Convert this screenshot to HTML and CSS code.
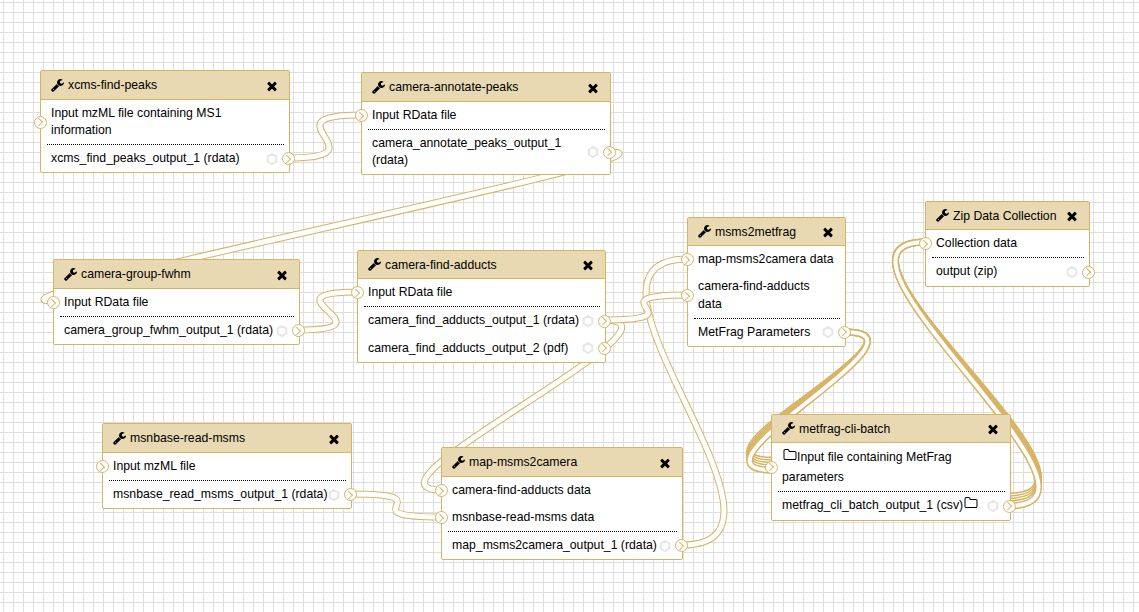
FILE: index.html
```html
<!DOCTYPE html>
<html lang="en">
<head>
  <meta charset="UTF-8">
  <meta name="viewport" content="width=device-width, initial-scale=1.0">
  <title>Workflow Editor</title>
  <link rel="stylesheet" href="styles.css">
</head>
<body>
  <!-- icon sheet -->
  <svg class="icon-sheet" aria-hidden="true">
    <symbol id="i-wrench" viewBox="0 0 1792 1792"><path d="M384 1344q0-26-19-45t-45-19-45 19-19 45 19 45 45 19 45-19 19-45zm644-420l-682 682q-37 37-90 37-52 0-91-37l-106-108q-38-36-38-90 0-53 38-91l681-681q39 98 114.5 173.5t173.5 114.5zm634-435q0 39-23 106-47 134-164.5 217.5t-258.5 83.5q-185 0-316.5-131.5t-131.5-316.5 131.5-316.5 316.5-131.5q58 0 121.5 16.5t107.5 46.5q16 11 16 28t-16 28l-293 169v224l193 107q5-3 79-48.5t135.5-81 70.5-35.5q15 0 23.5 10t8.5 25z"/></symbol>
    <symbol id="i-close" viewBox="0 0 1792 1792"><path d="M1490 1322q0 40-28 68l-136 136q-28 28-68 28t-68-28l-294-294-294 294q-28 28-68 28t-68-28l-136-136q-28-28-28-68t28-68l294-294-294-294q-28-28-28-68t28-68l136-136q28-28 68-28t68 28l294 294 294-294q28-28 68-28t68 28l136 136q28 28 28 68t-28 68l-294 294 294 294q28 28 28 68z"/></symbol>
    <symbol id="i-folder" viewBox="0 0 1792 1792"><path d="M1600 1312v-704q0-40-28-68t-68-28h-704q-40 0-68-28t-28-68v-64q0-40-28-68t-68-28h-320q-40 0-68 28t-28 68v960q0 40 28 68t68 28h1216q40 0 68-28t28-68zm128-704v704q0 92-66 158t-158 66h-1216q-92 0-158-66t-66-158v-960q0-92 66-158t158-66h320q92 0 158 66t66 158v32h672q92 0 158 66t66 158z"/></symbol>
    <symbol id="i-cog" viewBox="0 0 12 12"><path d="M6 1l4.3 2.5v5L6 11 1.700 8.500v-5z"/></symbol>
  </svg>

  <div class="canvas">
    <!-- connections, drawn under the nodes: gold stroke, then white core -->
    <svg class="wires" width="1139" height="612">
      <path d="M288 158C388 158 261 115 361 115"/>
      <path class="core" d="M288 158C388 158 261 115 361 115"/>
      <path d="M610 152C710 152 -47 301 53 301"/>
      <path class="core" d="M610 152C710 152 -47 301 53 301"/>
      <path d="M298 330C398 330 258 292 358 292"/>
      <path class="core" d="M298 330C398 330 258 292 358 292"/>
      <path d="M682 545C825 545 545 259 688 259"/>
      <path class="core" d="M682 545C825 545 545 259 688 259"/>
      <path d="M604 320C704 320 342 490 442 490"/>
      <path class="core" d="M604 320C704 320 342 490 442 490"/>
      <path d="M604 320C704 320 588 295 688 295"/>
      <path class="core" d="M604 320C704 320 588 295 688 295"/>
      <path d="M351 494C451 494 342 517 442 517"/>
      <path class="core" d="M351 494C451 494 342 517 442 517"/>

      <!-- collection into metfrag-cli-batch -->
      <g class="bundle">
        <path d="M845 332C945 332 672 460 772 460"/>
        <path class="core" d="M845 332C945 332 672 460 772 460"/>
        <path d="M845 332C945 332 672 462.500 772 462.500"/>
        <path class="core" d="M845 332C945 332 672 462.500 772 462.500"/>
        <path d="M845 332C945 332 672 465 772 465"/>
        <path class="core" d="M845 332C945 332 672 465 772 465"/>
        <path d="M845 332C945 332 672 467.500 772 467.500"/>
        <path class="core" d="M845 332C945 332 672 467.500 772 467.500"/>
        <path d="M845 332C945 332 672 470 772 470"/>
        <path class="core" d="M845 332C945 332 672 470 772 470"/>
      </g>

      <!-- collection into Zip Data Collection -->
      <g class="bundle">
        <path d="M1008 496C1140 496 794 242 926 242"/>
        <path class="core" d="M1008 496C1140 496 794 242 926 242"/>
        <path d="M1008 498.500C1140 498.500 794 242 926 242"/>
        <path class="core" d="M1008 498.500C1140 498.500 794 242 926 242"/>
        <path d="M1008 501C1140 501 794 242 926 242"/>
        <path class="core" d="M1008 501C1140 501 794 242 926 242"/>
        <path d="M1008 503.500C1140 503.500 794 242 926 242"/>
        <path class="core" d="M1008 503.500C1140 503.500 794 242 926 242"/>
        <path d="M1008 506C1140 506 794 242 926 242"/>
        <path class="core" d="M1008 506C1140 506 794 242 926 242"/>
      </g>
    </svg>

    <div class="node node-xcms">
      <div class="node-title">
        <svg class="icon"><use href="#i-wrench"/></svg>
        <span class="node-name">xcms-find-peaks</span>
        <svg class="icon"><use href="#i-close"/></svg>
      </div>
      <div class="row row-in"><span class="term term-in"></span><span class="label">Input mzML file containing MS1 information</span></div>
      <div class="rule"></div>
      <div class="row"><span class="label">xcms_find_peaks_output_1 (rdata)</span><svg class="cog"><use href="#i-cog"/></svg><span class="term term-out"></span></div>
    </div>

    <div class="node node-annotate">
      <div class="node-title">
        <svg class="icon"><use href="#i-wrench"/></svg>
        <span class="node-name">camera-annotate-peaks</span>
        <svg class="icon"><use href="#i-close"/></svg>
      </div>
      <div class="row row-in"><span class="term term-in"></span><span class="label">Input RData file</span></div>
      <div class="rule"></div>
      <div class="row"><span class="label">camera_annotate_peaks_output_1 (rdata)</span><svg class="cog"><use href="#i-cog"/></svg><span class="term term-out"></span></div>
    </div>

    <div class="node node-fwhm">
      <div class="node-title">
        <svg class="icon"><use href="#i-wrench"/></svg>
        <span class="node-name">camera-group-fwhm</span>
        <svg class="icon"><use href="#i-close"/></svg>
      </div>
      <div class="row row-in"><span class="term term-in"></span><span class="label">Input RData file</span></div>
      <div class="rule"></div>
      <div class="row"><span class="label">camera_group_fwhm_output_1 (rdata)</span><svg class="cog"><use href="#i-cog"/></svg><span class="term term-out"></span></div>
    </div>

    <div class="node node-snug node-adducts">
      <div class="node-title">
        <svg class="icon"><use href="#i-wrench"/></svg>
        <span class="node-name">camera-find-adducts</span>
        <svg class="icon"><use href="#i-close"/></svg>
      </div>
      <div class="row row-in"><span class="term term-in"></span><span class="label">Input RData file</span></div>
      <div class="rule"></div>
      <div class="row"><span class="label">camera_find_adducts_output_1 (rdata)</span><svg class="cog"><use href="#i-cog"/></svg><span class="term term-out"></span></div>
      <div class="row"><span class="label">camera_find_adducts_output_2 (pdf)</span><svg class="cog"><use href="#i-cog"/></svg><span class="term term-out"></span></div>
    </div>

    <div class="node node-snug node-msms">
      <div class="node-title">
        <svg class="icon"><use href="#i-wrench"/></svg>
        <span class="node-name">msms2metfrag</span>
        <svg class="icon"><use href="#i-close"/></svg>
      </div>
      <div class="row row-in"><span class="term term-in"></span><span class="label">map-msms2camera data</span></div>
      <div class="row row-in"><span class="term term-in"></span><span class="label">camera-find-adducts data</span></div>
      <div class="rule"></div>
      <div class="row"><span class="label">MetFrag Parameters</span><svg class="cog"><use href="#i-cog"/></svg><span class="term term-out"></span></div>
    </div>

    <div class="node node-snug node-zip">
      <div class="node-title">
        <svg class="icon"><use href="#i-wrench"/></svg>
        <span class="node-name">Zip Data Collection</span>
        <svg class="icon"><use href="#i-close"/></svg>
      </div>
      <div class="row row-in"><span class="term term-in"></span><span class="label">Collection data</span></div>
      <div class="rule"></div>
      <div class="row"><span class="label">output (zip)</span><svg class="cog"><use href="#i-cog"/></svg><span class="term term-out"></span></div>
    </div>

    <div class="node node-snug node-metfrag">
      <div class="node-title">
        <svg class="icon"><use href="#i-wrench"/></svg>
        <span class="node-name">metfrag-cli-batch</span>
        <svg class="icon"><use href="#i-close"/></svg>
      </div>
      <div class="row row-in"><span class="term term-in"></span><span class="label"><svg class="folder"><use href="#i-folder"/></svg>Input file containing MetFrag parameters</span></div>
      <div class="rule"></div>
      <div class="row row-folder"><span class="label">metfrag_cli_batch_output_1 (csv)<svg class="folder"><use href="#i-folder"/></svg></span><svg class="cog"><use href="#i-cog"/></svg><span class="term term-out"></span></div>
    </div>

    <div class="node node-msnbase">
      <div class="node-title">
        <svg class="icon"><use href="#i-wrench"/></svg>
        <span class="node-name">msnbase-read-msms</span>
        <svg class="icon"><use href="#i-close"/></svg>
      </div>
      <div class="row row-in"><span class="term term-in"></span><span class="label">Input mzML file</span></div>
      <div class="rule"></div>
      <div class="row"><span class="label">msnbase_read_msms_output_1 (rdata)</span><svg class="cog"><use href="#i-cog"/></svg><span class="term term-out"></span></div>
    </div>

    <div class="node node-map">
      <div class="node-title">
        <svg class="icon"><use href="#i-wrench"/></svg>
        <span class="node-name">map-msms2camera</span>
        <svg class="icon"><use href="#i-close"/></svg>
      </div>
      <div class="row row-in"><span class="term term-in"></span><span class="label">camera-find-adducts data</span></div>
      <div class="row row-in"><span class="term term-in"></span><span class="label">msnbase-read-msms data</span></div>
      <div class="rule"></div>
      <div class="row"><span class="label">map_msms2camera_output_1 (rdata)</span><svg class="cog"><use href="#i-cog"/></svg><span class="term term-out"></span></div>
    </div>
  </div>
</body>
</html>
```

FILE: styles.css
```css
body {
  margin: 0;
  font-family: "Liberation Sans", Arial, sans-serif;
  font-size: 12.25px;
  line-height: 17.15px;
  color: #000;
  overflow: hidden;
}

.icon-sheet {
  display: none;
}

/* grid paper */
.canvas {
  position: relative;
  height: 100vh;
  background-color: #fff;
  background-image:
    linear-gradient(90deg, transparent 3px, #dedede 3px, #dedede 4.5px, transparent 4.5px),
    linear-gradient(180deg, transparent 2px, #dedede 2px, #dedede 3.5px, transparent 3.5px);
  background-size: 10px 10px;
}

.wires {
  position: absolute;
  top: 0;
  left: 0;
}

.wires path {
  fill: none;
  stroke: #d8b365;
  stroke-width: 7;
}

.wires .core {
  stroke: #fff;
  stroke-width: 5;
}

.wires .bundle .core {
  stroke-width: 4;
}

/* nodes sit on a free canvas */
.node {
  position: absolute;
  box-sizing: border-box;
  background: #fff;
  border: 1px solid #d8b365;
  border-radius: 2px;
}

.node-xcms { left: 40px; top: 70px; width: 250px; }
.node-annotate { left: 361px; top: 72px; width: 250px; }
.node-fwhm { left: 53px; top: 259px; width: 247px; }
.node-adducts { left: 357px; top: 250px; width: 249px; }
.node-msms { left: 687px; top: 217px; width: 159px; }
.node-zip { left: 925px; top: 201px; width: 165px; }
.node-metfrag { left: 771px; top: 414px; width: 240px; }
.node-msnbase { left: 102px; top: 423px; width: 250px; }
.node-map { left: 441px; top: 447px; width: 242px; }

.node-title {
  display: flex;
  align-items: center;
  height: 27px;
  padding: 1px 10px 0 10px;
  background: #e8d9b2;
  border-bottom: 1px solid #d8b365;
}

.node-snug .node-title {
  height: 26.3px;
}

.node-name {
  flex: 1;
  margin-left: 3px;
}

.icon {
  width: 14px;
  height: 14px;
  flex: none;
}

.row {
  position: relative;
  display: flex;
  align-items: center;
  padding: 5px 5px 5px 10px;
}

.row-in {
  padding-right: 11px;
}

.row-folder {
  padding-top: 4px;
  padding-bottom: 4px;
}

.label {
  flex: 1;
}

.rule {
  margin: 0 5px 0 6px;
  border-top: 1px dotted #000;
}

.cog {
  flex: none;
  width: 12px;
  height: 12px;
  margin-right: 6px;
  fill: #fff;
  stroke: #e6e6e6;
  stroke-width: 2;
}

/* the folder hangs low, so its line comes out a little taller */
.folder {
  width: 14px;
  height: 14px;
  margin: 0 0 6.5px 1px;
  vertical-align: -7.5px;
}

/* connection terminals */
.term {
  position: absolute;
  top: 50%;
  box-sizing: border-box;
  width: 13px;
  height: 13px;
  margin-top: -6.5px;
  background: #fff;
  border: 1.5px solid #d8b365;
  border-radius: 50%;
}

.term::after {
  content: "";
  position: absolute;
  top: 2.500px;
  left: 0.500px;
  width: 4.500px;
  height: 4.500px;
  border-top: 1px solid #d8b365;
  border-right: 1px solid #d8b365;
  transform: rotate(45deg);
}

.term-in {
  left: -7px;
}

.term-out {
  right: -6px;
}
```
